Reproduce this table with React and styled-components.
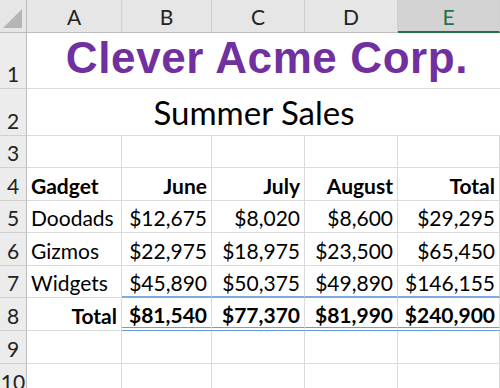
import styled, { createGlobalStyle } from "styled-components";

const GlobalStyle = createGlobalStyle`
  html, body {
    margin: 0;
    padding: 0;
    background: #ffffff;
    overflow: hidden;
  }
  body {
    font-family: "Lato", "Liberation Sans", sans-serif;
  }
`;

const months = ["June", "July", "August"];

const rows = [
  { name: "Doodads", values: ["$12,675", "$8,020", "$8,600", "$29,295"] },
  { name: "Gizmos", values: ["$22,975", "$18,975", "$23,500", "$65,450"] },
  { name: "Widgets", values: ["$45,890", "$50,375", "$49,890", "$146,155"] },
];

const totals = ["$81,540", "$77,370", "$81,990", "$240,900"];

const App = () => {
  return (
    <>
      <GlobalStyle />
      <Sheet>
        <Corner>
          <svg width="21" height="21" viewBox="0 0 21 21">
            <polygon points="20,1 20,20 1,20" fill="#b5b5b5" />
          </svg>
        </Corner>
        {["A", "B", "C", "D", "E"].map((c) => (
          <ColHeader key={c} $selected={c === "E"}>
            {c}
          </ColHeader>
        ))}

        <RowHeader>1</RowHeader>
        <Title>Clever Acme Corp.</Title>

        <RowHeader>2</RowHeader>
        <Subtitle>Summer Sales</Subtitle>

        <RowHeader>3</RowHeader>
        <Cell />
        <Cell />
        <Cell />
        <Cell />
        <Cell />

        <RowHeader>4</RowHeader>
        <Cell $bold>Gadget</Cell>
        {months.map((m) => (
          <Cell key={m} $bold $right>
            {m}
          </Cell>
        ))}
        <Cell $bold $right>
          Total
        </Cell>

        {rows.map((r, i) => (
          <Row key={r.name} r={r} n={i + 5} last={i === rows.length - 1} />
        ))}

        <RowHeader>8</RowHeader>
        <Cell $bold $right>
          Total
        </Cell>
        {totals.map((t) => (
          <Cell key={t} $bold $right $total>
            {t}
          </Cell>
        ))}

        {[9, 10].map((n) => (
          <Blank key={n} n={n} />
        ))}
      </Sheet>
    </>
  );
};

const Row = ({ r, n, last }) => (
  <>
    <RowHeader>{n}</RowHeader>
    <Cell>{r.name}</Cell>
    {r.values.map((v) => (
      <Cell key={v} $right $above={last}>
        {v}
      </Cell>
    ))}
  </>
);

const Blank = ({ n }) => (
  <>
    <RowHeader>{n}</RowHeader>
    <Cell />
    <Cell />
    <Cell />
    <Cell />
    <Cell />
  </>
);

export default App;

const Sheet = styled.div`
  display: grid;
  grid-template-columns: 27px 95px 90px 93px 93px 102px;
  grid-template-rows: 33px 56px 47px 32px 33px 32px 33px 32px 33px 33px 33px;
  width: 500px;
  height: 388px;
  overflow: hidden;
  color: #000;
`;

const Corner = styled.div`
  background: #e6e6e6;
  border-right: 1px solid #bdbdbd;
  border-bottom: 1px solid #bdbdbd;
  box-sizing: border-box;
  display: flex;
  align-items: flex-end;
  justify-content: flex-end;
  padding: 0 3px 3px 0;
`;

const ColHeader = styled.div`
  box-sizing: border-box;
  background: ${(p) => (p.$selected ? "#d3d3d3" : "#e6e6e6")};
  color: ${(p) => (p.$selected ? "#217346" : "#222")};
  border-right: 1px solid #cfcfcf;
  border-bottom: ${(p) => (p.$selected ? "2px solid #217346" : "1px solid #bdbdbd")};
  display: flex;
  align-items: center;
  justify-content: center;
  font-size: 21px;
  padding-top: 1px;
`;

const RowHeader = styled.div`
  box-sizing: border-box;
  background: #ececec;
  color: #222;
  border-right: 1px solid #bdbdbd;
  border-bottom: 1px solid #d0d0d0;
  display: flex;
  align-items: flex-end;
  justify-content: center;
  font-size: 21px;
  line-height: 1.2;
  padding-bottom: 2px;
`;

const Cell = styled.div`
  box-sizing: border-box;
  border-right: 1px solid #dadada;
  border-bottom: ${(p) =>
    p.$total ? "4px double #6a9ed8" : p.$above ? "2px solid #7eaadb" : "1px solid #dadada"};
  display: flex;
  align-items: flex-end;
  justify-content: ${(p) => (p.$right ? "flex-end" : "flex-start")};
  padding: 0 4px ${(p) => (p.$total ? "0" : p.$above ? "1px" : "2px")} 4px;
  font-size: 21px;
  line-height: 1.2;
  font-weight: ${(p) => (p.$bold ? 700 : 400)};
  white-space: nowrap;
`;

const Title = styled.div`
  grid-column: 2 / 7;
  box-sizing: border-box;
  border-bottom: 1px solid #dadada;
  display: flex;
  align-items: flex-end;
  justify-content: center;
  padding: 0 0 4px 7px;
  font-family: "Liberation Sans", Arial, sans-serif;
  font-weight: 700;
  font-size: 44px;
  letter-spacing: 0.6px;
  line-height: 1.15;
  color: #7030a0;
`;

const Subtitle = styled.div`
  grid-column: 2 / 7;
  box-sizing: border-box;
  border-bottom: 1px solid #dadada;
  display: flex;
  align-items: flex-end;
  justify-content: center;
  padding: 0 19px 2px 0;
  font-size: 33px;
  line-height: 1.2;
`;
